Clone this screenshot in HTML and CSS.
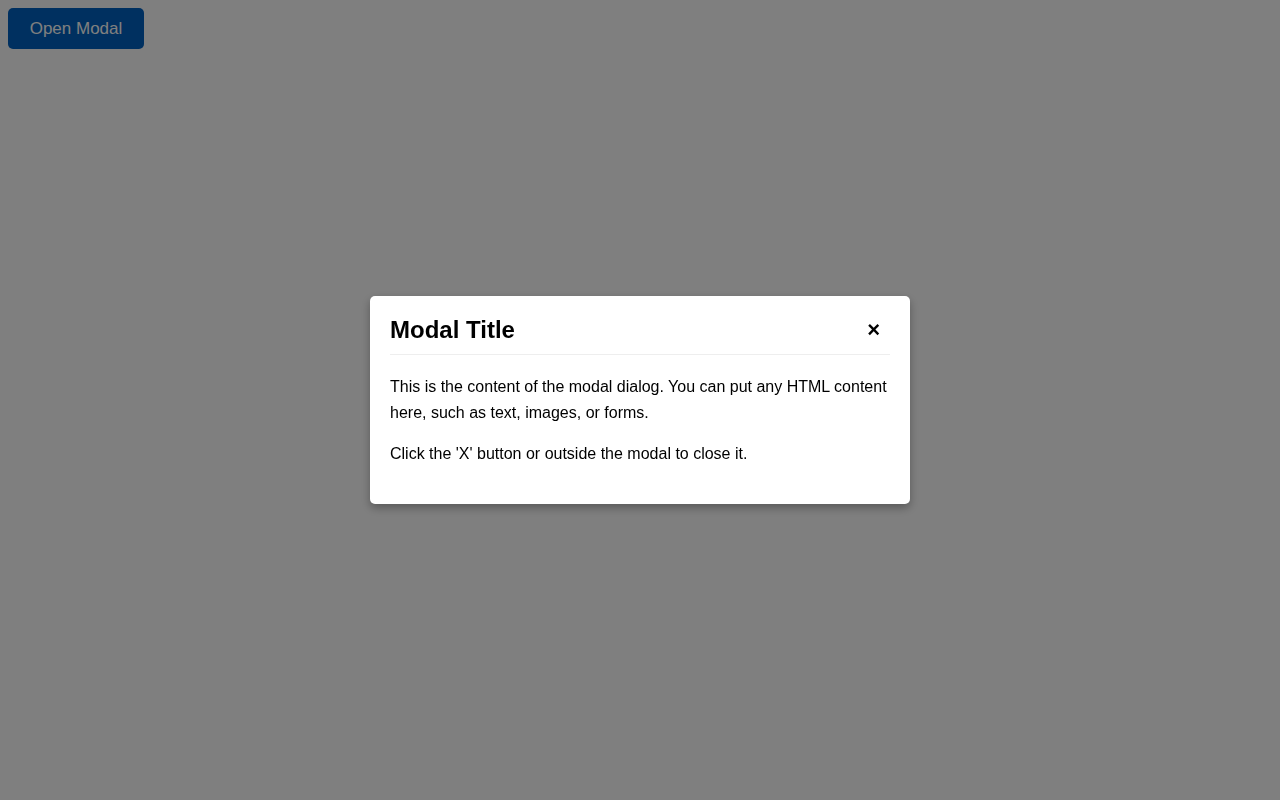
FILE: index.html
```html
<!DOCTYPE html>
<html>
    <head>
        <meta charset="utf-8">
        <title>Modal</title>
        <meta name="viewport" content="width=device-width, initial-scale=1">
        <link rel="stylesheet" href="styles.css">
    </head>
    <body>
        <button class="open-btn" type="button">Open Modal</button>

        <div class="overlay">
            <div class="modal">
                <div class="modal-header">
                    <h2>Modal Title</h2>
                    <button class="close-btn" type="button">&times;</button>
                </div>
                <div class="modal-body">
                    <p>This is the content of the modal dialog. You can put any HTML content here, such as text, images, or forms.</p>
                    <p>Click the 'X' button or outside the modal to close it.</p>
                </div>
            </div>
        </div>
    </body>
</html>
```

FILE: styles.css
```css
body{
    margin: 8px;
    font-family: "Liberation Sans", Arial, sans-serif;
    background-color: #fff;
}
.open-btn{
    width: 136px;
    height: 41px;
    padding: 0;
    border: none;
    border-radius: 5px;
    background-color: #0060c0;
    color: #fff;
    font-family: inherit;
    font-size: 17px;
}
/* dark layer over the page, dialog sits in the middle */
.overlay{
    position: fixed;
    top: 0;
    left: 0;
    right: 0;
    bottom: 0;
    display: flex;
    align-items: center;
    justify-content: center;
    background-color: rgba(0,0,0,.5);
}
.modal{
    width: 540px;
    box-sizing: border-box;
    padding: 20px;
    background-color: #fff;
    border-radius: 5px;
    box-shadow: 0 4px 10px rgba(0,0,0,.3);
}
.modal-header{
    display: flex;
    align-items: center;
    justify-content: space-between;
    height: 39px;
    border-bottom: 1px solid #eee;
    box-sizing: border-box;
}
.modal-header h2{
    margin: 0 0 10px;
    font-size: 24px;
    line-height: 28px;
}
.close-btn{
    margin: 0 0 10px;
    padding: 0 10px;
    border: none;
    background: none;
    font-family: inherit;
    font-size: 22px;
    font-weight: bold;
    line-height: 24px;
    color: #000;
}
.modal-body{
    padding-top: 3px;
}
.modal-body p{
    margin: 16px 0 15px;
    font-size: 16px;
    line-height: 26px;
}
.modal-body p + p{
    margin-top: 15px;
}
.modal-body p:last-child{
    margin-bottom: 17px;
}
```
